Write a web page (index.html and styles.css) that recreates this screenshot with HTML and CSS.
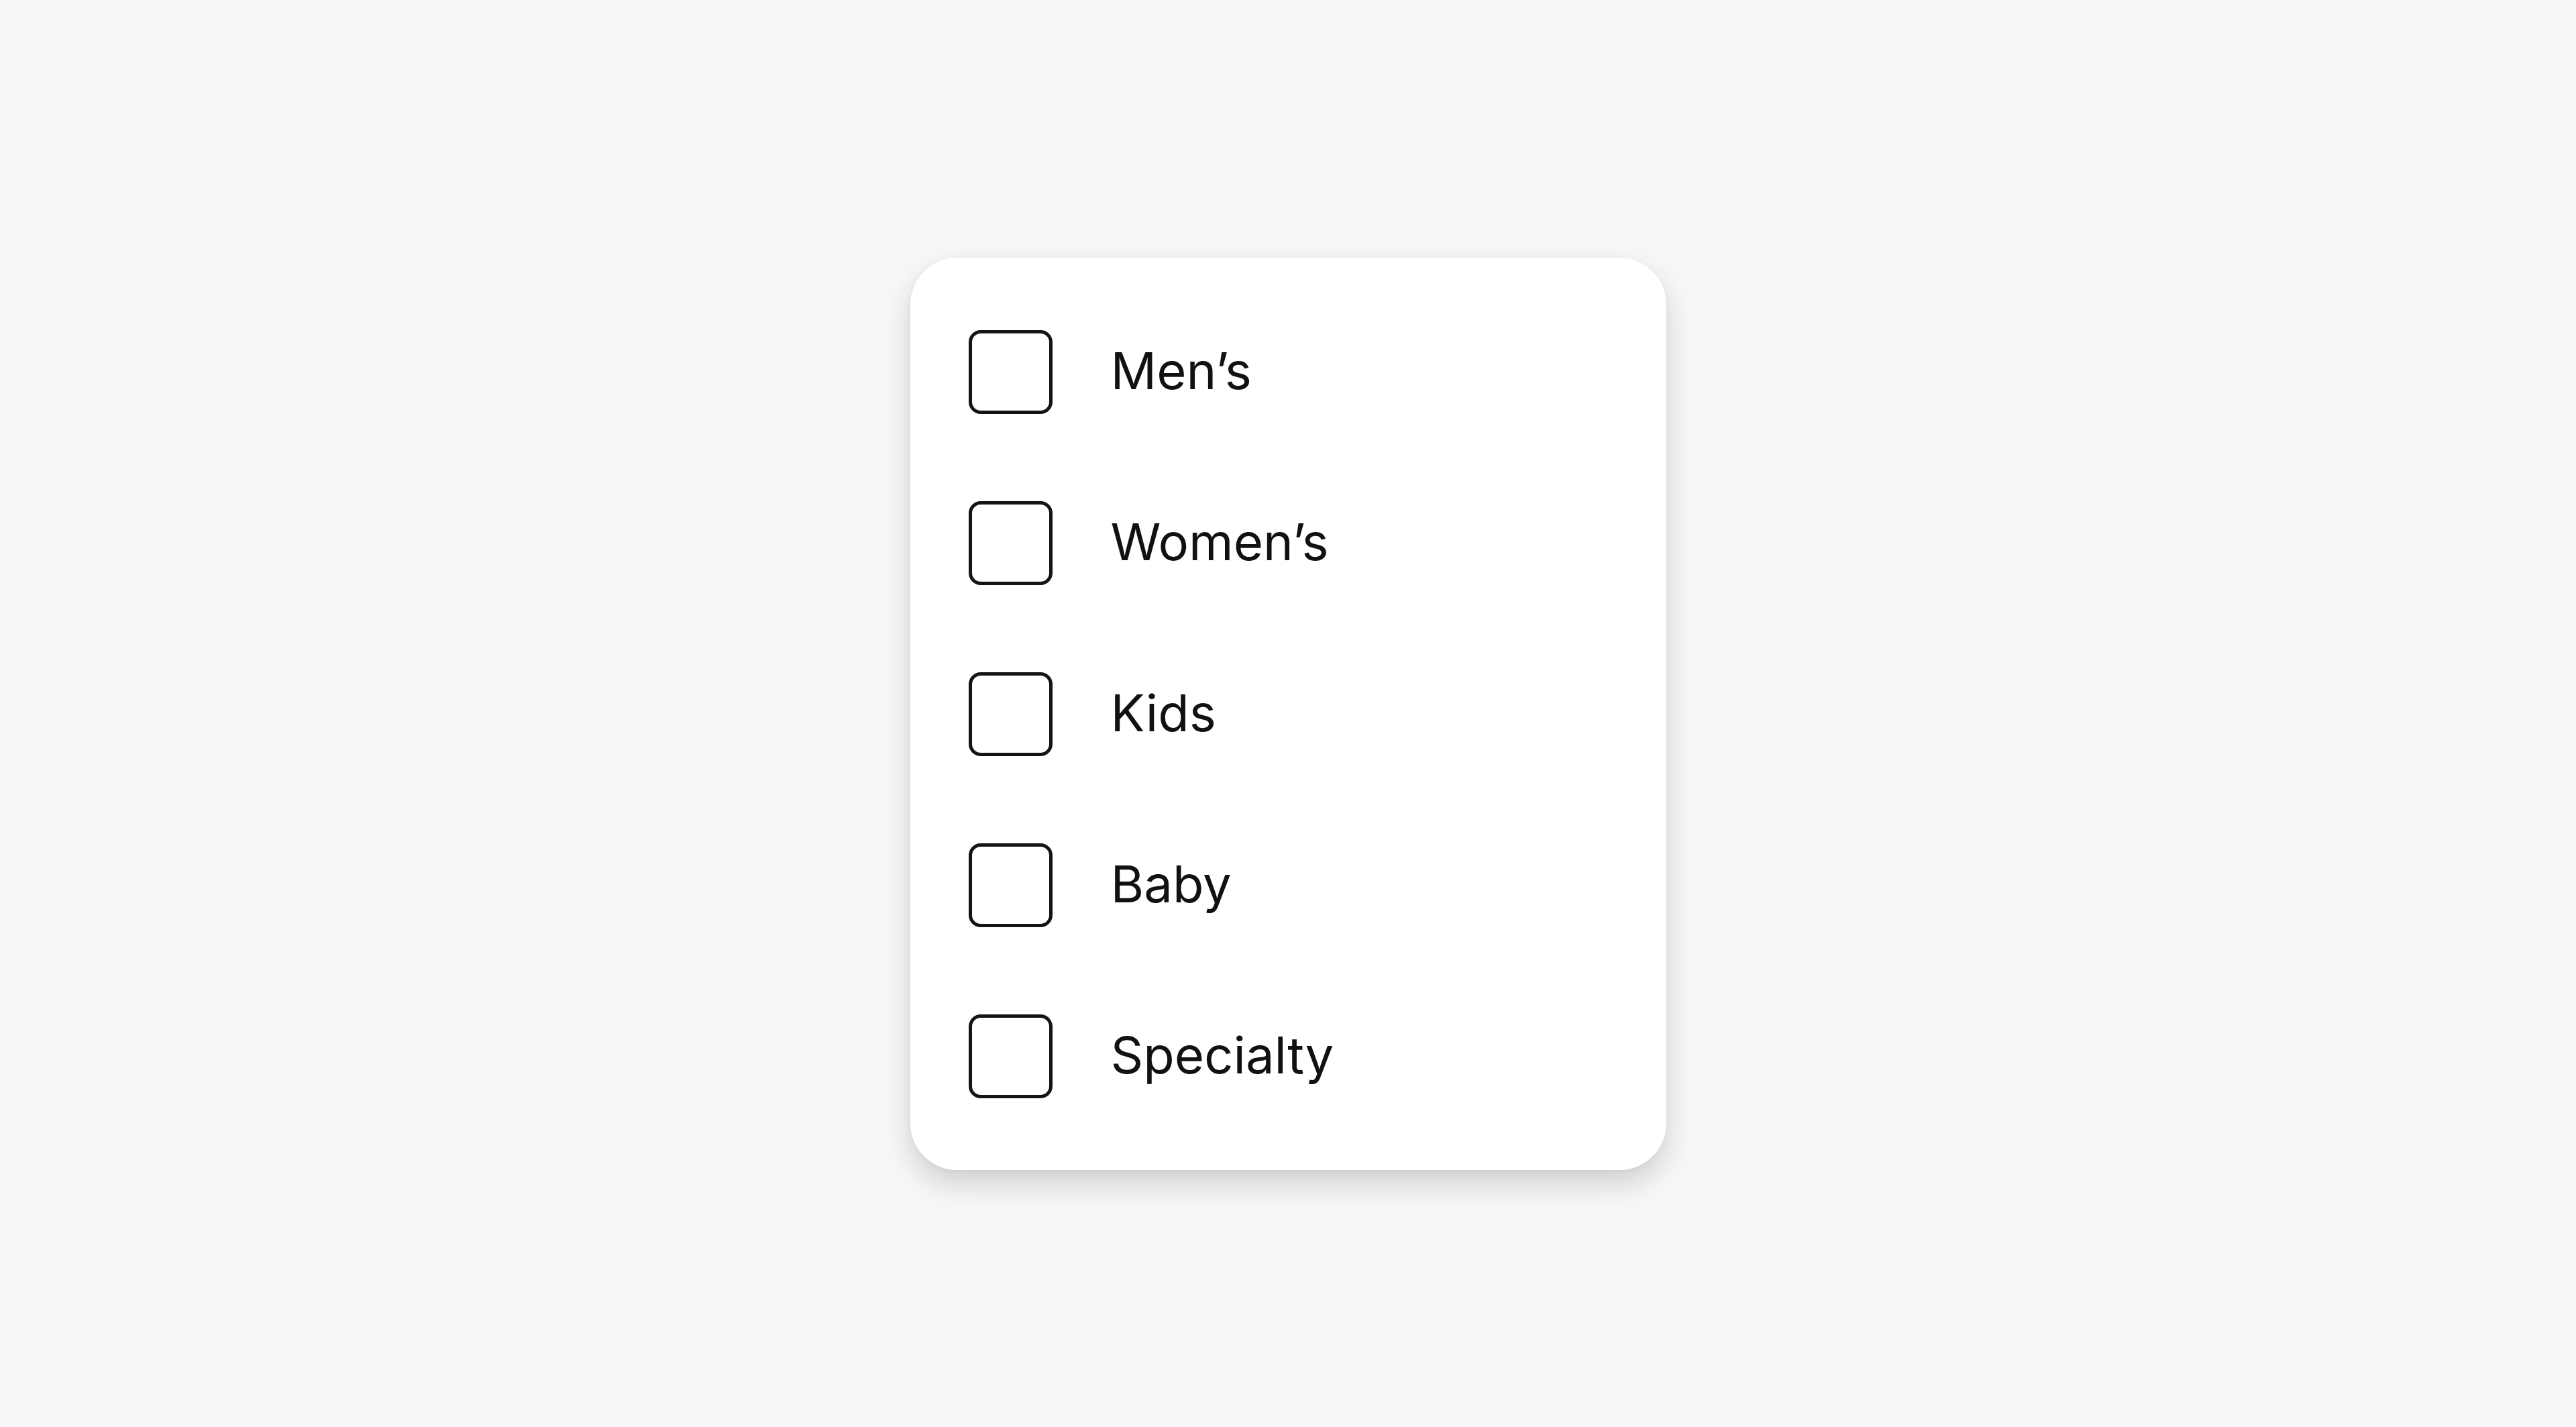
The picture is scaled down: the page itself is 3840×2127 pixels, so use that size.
FILE: index.html
```html
<!DOCTYPE html>
<html lang="en">
<head>
<meta charset="UTF-8">
<meta name="viewport" content="width=device-width, initial-scale=1.0">
<title>Category Filter</title>
<link rel="stylesheet" href="styles.css">
</head>
<body>
<div class="filter-card">
  <label class="filter-option">
    <input type="checkbox" class="filter-check">
    <span class="box"></span>
    <span class="filter-label">Men’s</span>
  </label>
  <label class="filter-option">
    <input type="checkbox" class="filter-check">
    <span class="box"></span>
    <span class="filter-label">Women’s</span>
  </label>
  <label class="filter-option">
    <input type="checkbox" class="filter-check">
    <span class="box"></span>
    <span class="filter-label">Kids</span>
  </label>
  <label class="filter-option">
    <input type="checkbox" class="filter-check">
    <span class="box"></span>
    <span class="filter-label">Baby</span>
  </label>
  <label class="filter-option">
    <input type="checkbox" class="filter-check">
    <span class="box"></span>
    <span class="filter-label">Specialty</span>
  </label>
</div>
</body>
</html>
```

FILE: styles.css
```css
body {
  font-family: Inter, "Liberation Sans", Arial, sans-serif;
  display: flex;
  justify-content: center;
  align-items: center;
  height: 100vh;
  margin: 0;
  background-color: #f7f7f7;
}
.filter-card {
  width: 1127px;
  box-sizing: border-box;
  padding: 108px 87px 107px;
  display: flex;
  flex-direction: column;
  gap: 130px;
  background: #ffffff;
  border-radius: 70px;
  box-shadow: 0 20px 44px rgba(0,0,0,0.16), 0 2px 10px rgba(0,0,0,0.04);
}
.filter-option {
  display: flex;
  align-items: center;
  height: 125px;
  cursor: pointer;
}
.filter-check {
  display: none;
}
.box {
  width: 125px;
  height: 125px;
  box-sizing: border-box;
  border: 5px solid #141414;
  border-radius: 18px;
  flex-shrink: 0;
}
.filter-label {
  margin-left: 87px;
  margin-bottom: 4px;
  font-size: 76px;
  color: #111111;
  line-height: 1;
}
```
